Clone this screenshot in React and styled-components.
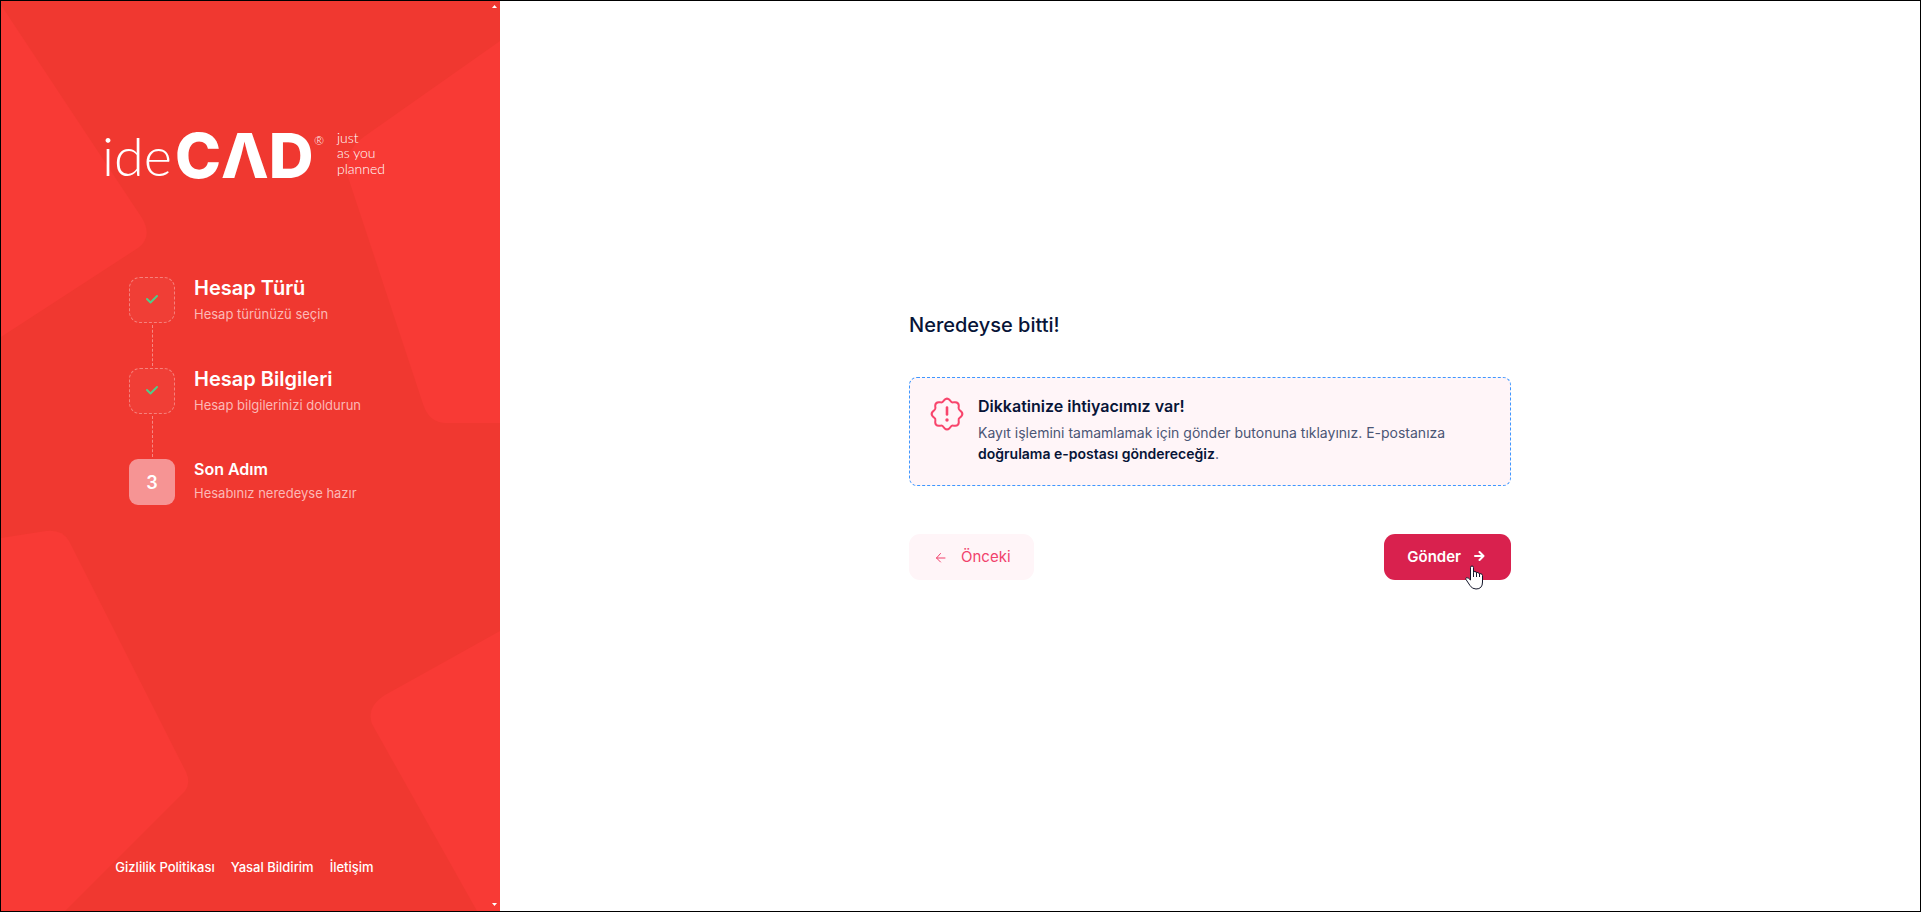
import React from "react";
import styled, { createGlobalStyle } from "styled-components";

const GlobalStyle = createGlobalStyle`
  *, *::before, *::after { box-sizing: border-box; }
  body { margin: 0; font-family: Inter, "Liberation Sans", sans-serif; color: #071437; }
  h1, h2, p, ol { margin: 0; padding: 0; }
`;

const Page = styled.div`
  display: flex;
  min-height: 100vh;
  border: 1px solid #000;
  background: #fff;
`;

const Sidebar = styled.aside`
  position: relative;
  display: flex;
  flex-direction: column;
  flex: 0 0 499px;
  padding: 112px 12px 34px 0;
  background: #f03830;
  overflow: hidden;
`;

const Backdrop = styled.svg`
  position: absolute;
  inset: 0;
  width: 100%;
  height: 100%;
  fill: #f83a35;
`;

const ScrollArrow = styled.svg`
  position: absolute;
  right: 3px;
  top: ${(p) => (p.$down ? "auto" : "4px")};
  bottom: ${(p) => (p.$down ? "5px" : "auto")};
  width: 5px;
  height: 3px;
  fill: #fff;
`;

const Logo = styled.svg`
  position: relative;
  display: block;
  width: 300px;
  height: 90px;
  margin-left: 98px;
  fill: #fff;
`;

const Steps = styled.ol`
  position: relative;
  flex: 1;
  list-style: none;
  margin: 74px 0 0 128px;
`;

const Step = styled.li`
  display: flex;
  gap: 19px;
`;

const Rail = styled.div`
  display: flex;
  flex-direction: column;
  align-items: center;
`;

const Marker = styled.span`
  display: flex;
  align-items: center;
  justify-content: center;
  width: 46px;
  height: 46px;
  border-radius: ${(p) => (p.$current ? "9px" : "11px")};
  border: ${(p) => (p.$current ? "0" : "1px dashed rgba(255,255,255,0.35)")};
  background: ${(p) => (p.$current ? "#f69494" : "rgba(255,255,255,0.03)")};
  color: #fff;
  font-size: 18px;
  font-weight: 600;
`;

const Connector = styled.span`
  height: 41px;
  margin: 2px 0;
  border-left: 1px dashed rgba(255, 255, 255, 0.4);
`;

const StepTitle = styled.h2`
  font-size: ${(p) => (p.$current ? "16px" : "20px")};
  line-height: ${(p) => (p.$current ? "20px" : "22px")};
  margin-bottom: ${(p) => (p.$current ? "4px" : "5px")};
  font-weight: 600;
  color: #fff;
`;

const StepNote = styled.p`
  font-size: 13px;
  line-height: 20px;
  font-weight: 400;
  color: #fcb8b6;
`;

const FooterNav = styled.nav`
  position: relative;
  display: flex;
  justify-content: center;
  gap: 16px;
`;

const FooterLink = styled.a`
  font-size: 13px;
  line-height: 20px;
  font-weight: 500;
  color: #fff;
  text-decoration: none;
`;

const Main = styled.main`
  flex: 1;
  display: flex;
  justify-content: center;
  padding: 309px 20px 32px;
`;

const Form = styled.form`
  width: 100%;
  max-width: 602px;
`;

const Heading = styled.h1`
  font-size: 20px;
  line-height: 30px;
  font-weight: 500;
`;

const Notice = styled.section`
  display: flex;
  gap: 13px;
  margin: 37px 0 48px;
  padding: 18px 20px 20px 19px;
  min-height: 109px;
  border: 1px dashed #3e97ff;
  border-radius: 8px;
  background: #fff5f8;
`;

const NoticeTitle = styled.h2`
  font-size: 16px;
  line-height: 20px;
  font-weight: 600;
  margin-bottom: 6px;
`;

const NoticeBody = styled.p`
  font-size: 14px;
  line-height: 21px;
  color: #4b5675;
`;

const Strong = styled.strong`
  font-weight: 600;
  color: #071437;
`;

const SealIcon = styled.svg`
  flex: none;
  width: 36px;
  height: 36px;
  fill: none;
  stroke: #f8456c;
  stroke-width: 2;
  stroke-linecap: round;
  stroke-linejoin: round;
`;

const Actions = styled.div`
  display: flex;
  justify-content: space-between;
`;

const Button = styled.button`
  position: relative;
  display: flex;
  align-items: center;
  gap: ${(p) => (p.$primary ? "12px" : "15px")};
  height: 46px;
  padding: ${(p) => (p.$primary ? "0 26px 0 23px" : "0 23px 0 26px")};
  border: 0;
  border-radius: 11px;
  background: ${(p) => (p.$primary ? "#d9214e" : "#fff5f8")};
  color: ${(p) => (p.$primary ? "#fff" : "#f1416c")};
  font-family: inherit;
  font-size: 15px;
  line-height: 22px;
  font-weight: ${(p) => (p.$primary ? 600 : 400)};
  cursor: pointer;
`;

const LineIcon = styled.svg`
  flex: none;
  width: ${(p) => p.$size}px;
  height: ${(p) => p.$size}px;
  fill: none;
  stroke: ${(p) => p.$color || "currentColor"};
  stroke-width: ${(p) => p.$weight};
  stroke-linecap: round;
  stroke-linejoin: round;
`;

const Pointer = styled.svg`
  position: absolute;
  left: 81px;
  top: 31px;
  width: 19px;
  height: 25px;
  fill: #fff;
  stroke: #15172b;
`;

const steps = [
  { title: "Hesap Türü", note: "Hesap türünüzü seçin", done: true },
  { title: "Hesap Bilgileri", note: "Hesap bilgilerinizi doldurun", done: true },
  { title: "Son Adım", note: "Hesabınız neredeyse hazır", done: false },
];

const sealPoints = Array.from({ length: 8 }, (_, i) => {
  const at = (deg, r) => {
    const a = (deg * Math.PI) / 180;
    return `${(18 + r * Math.cos(a)).toFixed(2)} ${(18 + r * Math.sin(a)).toFixed(2)}`;
  };
  const d = i * 45;
  const start = i === 0 ? `M${at(-10, 14.4)}` : "";
  return `${start}Q${at(d, 16.6)} ${at(d + 10, 14.4)}L${at(d + 16, 13.3)}Q${at(d + 22.5, 12.2)} ${at(d + 29, 13.3)}L${at(d + 35, 14.4)}`;
}).join("") + "Z";

export default function App() {
  return (
    <>
      <GlobalStyle />
      <Page>
        <Sidebar>
          <Backdrop viewBox="1 1 499 910" preserveAspectRatio="none" aria-hidden="true">
            <path d="M1 5L142 218Q153 237 138 248L1 337Z" />
            <path d="M500 41L365 136Q341 153 348 177L423 404Q429 423 446 423H500Z" />
            <path d="M1 538L46 531Q62 529 69 541L186 772Q191 783 185 791L65 911H1Z" />
            <path d="M500 631L385 695Q366 707 372 724L477 911H500Z" />
          </Backdrop>
          <Logo viewBox="0 0 300 90" role="img" aria-label="ideCAD just as you planned">
            <text x="3" y="63" fontFamily="Lato" fontWeight="300" fontSize="54">ide</text>
            <text x="76" y="65" fontFamily="Inter" fontWeight="800" fontSize="62">CΛD</text>
            <text x="215" y="32" fontFamily="Lato" fontWeight="300" fontSize="12">®</text>
            <g fontFamily="Lato" fontWeight="300" fontSize="14">
              <text x="238" y="30">just</text>
              <text x="238" y="45">as you</text>
              <text x="238" y="61">planned</text>
            </g>
          </Logo>
          <Steps>
            {steps.map((step, i) => (
              <Step key={step.title}>
                <Rail>
                  <Marker $current={!step.done}>
                    {step.done ? (
                      <LineIcon $size={14} $weight={2} $color="#50cd89" viewBox="0 0 14 14" aria-hidden="true">
                        <path d="M2 6L5.500 9.500L12 3" />
                      </LineIcon>
                    ) : (
                      i + 1
                    )}
                  </Marker>
                  {i < steps.length - 1 && <Connector />}
                </Rail>
                <div>
                  <StepTitle $current={!step.done}>{step.title}</StepTitle>
                  <StepNote>{step.note}</StepNote>
                </div>
              </Step>
            ))}
          </Steps>
          <FooterNav>
            <FooterLink href="#privacy">Gizlilik Politikası</FooterLink>
            <FooterLink href="#legal">Yasal Bildirim</FooterLink>
            <FooterLink href="#contact">İletişim</FooterLink>
          </FooterNav>
          <ScrollArrow viewBox="0 0 5 3" aria-hidden="true"><path d="M0 3L2.5 0L5 3Z" /></ScrollArrow>
          <ScrollArrow $down viewBox="0 0 5 3" aria-hidden="true"><path d="M0 0L2.5 3L5 0Z" /></ScrollArrow>
        </Sidebar>
        <Main>
          <Form onSubmit={(e) => e.preventDefault()}>
            <Heading>Neredeyse bitti!</Heading>
            <Notice>
              <SealIcon viewBox="0 0 36 36" aria-hidden="true">
                <path d={sealPoints} />
                <path d="M18 11.500V18.500" strokeWidth="2.600" />
                <path d="M18 24V24.1" strokeWidth="3.400" />
              </SealIcon>
              <div>
                <NoticeTitle>Dikkatinize ihtiyacımız var!</NoticeTitle>
                <NoticeBody>
                  Kayıt işlemini tamamlamak için gönder butonuna tıklayınız. E-postanıza{" "}
                  <Strong>doğrulama e-postası göndereceğiz</Strong>.
                </NoticeBody>
              </div>
            </Notice>
            <Actions>
              <Button type="button">
                <LineIcon $size={11} $weight={1} viewBox="0 0 11 11" aria-hidden="true">
                  <path d="M10 6H1.5M5.5 1.5L1.5 6L5.5 10" />
                </LineIcon>
                Önceki
              </Button>
              <Button type="submit" $primary>
                Gönder
                <LineIcon $size={12} $weight={2} viewBox="0 1 12 12" aria-hidden="true">
                  <path d="M2 6H10M6.500 2L10.500 6L6.500 10" />
                </LineIcon>
                <Pointer viewBox="0 0 19 25" aria-hidden="true">
                  <path d="M5.5 15V2.5Q5.5 1 7 1T8.500 2.500V7.500Q8.500 6.500 10 6.500T11.500 8Q12 7.300 13 7.500T14.500 9.200Q15 8.500 16 8.700T17.500 10.500V17Q17.500 24 11 24Q7 24 5 20.500L1 14.500Q0.500 13 1.500 12.700Q3 12.200 5.500 15Z" />
                  <path d="M8.500 7.500V12M11.500 8V12M14.500 9V12" />
                </Pointer>
              </Button>
            </Actions>
          </Form>
        </Main>
      </Page>
    </>
  );
}
